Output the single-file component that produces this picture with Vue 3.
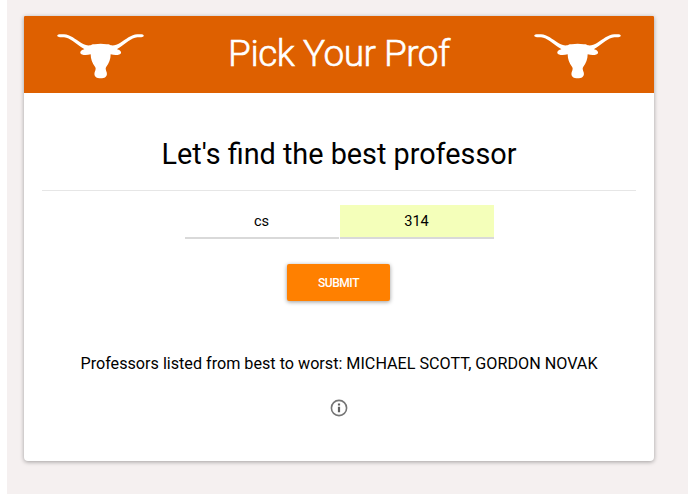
<template>
  <div class="page">
    <main class="card">
      <header class="header">
        <svg class="logo" viewBox="21 25 261 136" aria-hidden="true">
          <path :d="longhorn" />
        </svg>
        <h1 class="title">Pick Your Prof</h1>
        <svg class="logo" viewBox="21 25 261 136" aria-hidden="true">
          <path :d="longhorn" />
        </svg>
      </header>

      <section class="content">
        <h2 class="subtitle">Let's find the best professor</h2>
        <form class="search" @submit.prevent="onSubmit">
          <div class="fields">
            <input v-model="department" class="field" type="text" aria-label="Department" />
            <input v-model="course" class="field filled" type="text" aria-label="Course" />
          </div>
          <button class="submit" type="submit">SUBMIT</button>
        </form>
        <p class="result">Professors listed from best to worst: {{ professors.join(', ') }}</p>
        <svg class="info" viewBox="0 0 20 20" aria-hidden="true">
          <circle cx="10" cy="10" r="7.6" />
          <path d="M10 5.4v2.1M10 8.7v5.6" />
        </svg>
      </section>
    </main>
  </div>
</template>

<script setup>
import { ref } from 'vue';

const department = ref('cs');
const course = ref('314');
const professors = ref(['MICHAEL SCOTT', 'GORDON NOVAK']);

const longhorn =
  'M22 33C20 27 32 27 42 28C61 29 76 43 94 54C103 60 112 62 121 61C126 59 128 57 134 58C147 56 157 56 170 58C176 57 178 59 183 61C192 62 201 60 210 54C228 43 243 29 262 28C272 27 283 27 281 33C280 38 270 36 262 37C243 39 228 55 211 66C206 69 203 71 201 73C209 74 214 79 213 84C211 91 195 92 182 88C182 103 177 115 169 125C165 131 168 136 170 142C173 153 166 160 152 160C138 160 131 153 134 142C136 136 139 131 135 125C127 115 122 103 122 88C109 92 93 91 91 84C90 79 95 74 103 73C101 71 98 69 93 66C76 55 61 39 42 37C34 36 24 38 22 33Z';

function onSubmit() {
  department.value = department.value.trim();
  course.value = course.value.trim();
}
</script>

<style>
body {
  background: #fff;
}
</style>

<style scoped>
.page {
  box-sizing: border-box;
  width: 681px;
  height: 494px;
  margin-left: 7px;
  padding: 16px 34px 0 17px;
  background: #f5f0f0;
  font-family: Roboto, sans-serif;
  color: #000;
}

.card {
  height: 445px;
  border-radius: 1px 1px 4px 4px;
  background: #fff;
  box-shadow: 0 1px 4px rgba(0, 0, 0, 0.35);
  overflow: hidden;
}

.header {
  display: flex;
  align-items: center;
  justify-content: space-between;
  box-sizing: border-box;
  height: 77px;
  padding: 3px 33px 0;
  background: #de6000;
}

.logo {
  width: 87px;
  height: 46px;
  fill: #fff;
}

.title {
  margin: 0;
  padding-bottom: 4px;
  font-size: 37px;
  font-weight: 300;
  line-height: 44px;
  letter-spacing: -0.5px;
  -webkit-text-stroke: 0.6px #fff;
  color: #fff;
  white-space: nowrap;
}

.content {
  display: flex;
  flex-direction: column;
  align-items: center;
  padding: 0 18px;
}

.subtitle {
  box-sizing: border-box;
  width: 100%;
  height: 98px;
  margin: 0;
  padding-top: 43px;
  border-bottom: 1px solid #e6e6e6;
  font-size: 28.8px;
  font-weight: 400;
  line-height: 36px;
  text-align: center;
  white-space: nowrap;
}

.search {
  display: flex;
  flex-direction: column;
  align-items: center;
  margin-top: 14px;
}

.fields {
  display: flex;
  gap: 1px;
}

.field {
  box-sizing: border-box;
  width: 154px;
  height: 34px;
  padding: 0;
  border: 0;
  border-bottom: 2px solid #d9d9d9;
  border-radius: 0;
  outline: 0;
  background: transparent;
  font: 400 14.6px/20px Roboto, sans-serif;
  color: #000;
  text-align: center;
}

.field.filled {
  background: #f4ffba;
}

.submit {
  width: 103px;
  height: 37px;
  margin: 25px 1px 0 0;
  padding: 0;
  border: 0;
  border-radius: 2px;
  background: #ff8000;
  box-shadow: 0 1px 4px rgba(0, 0, 0, 0.4);
  font: 500 12px/39px Roboto, sans-serif;
  letter-spacing: -0.45px;
  color: #fff;
}

.result {
  margin: 53px 0 0;
  font-size: 16.17px;
  line-height: 20px;
  white-space: nowrap;
}

.info {
  width: 20px;
  height: 20px;
  margin-top: 24px;
  fill: none;
  stroke: #757575;
  stroke-width: 1.6;
}

.info path {
  stroke: #606060;
  stroke-width: 2.2;
}
</style>
